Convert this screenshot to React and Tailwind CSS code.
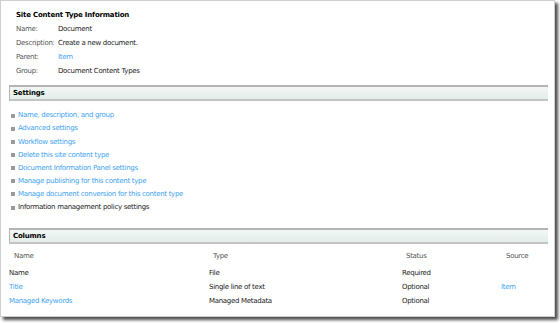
export default function App() {
  const font = { fontFamily: '"DejaVu Sans", Verdana, sans-serif' };
  const settings = [
    ["Name, description, and group", true],
    ["Advanced settings", true],
    ["Workflow settings", true],
    ["Delete this site content type", true],
    ["Document Information Panel settings", true],
    ["Manage publishing for this content type", true],
    ["Manage document conversion for this content type", true],
    ["Information management policy settings", false],
  ];
  const info = [
    ["Name:", "Document", false],
    ["Description:", "Create a new document.", false],
    ["Parent:", "Item", true],
    ["Group:", "Document Content Types", false],
  ];
  const rows = [
    ["Name", false, "File", "Required", ""],
    ["Title", true, "Single line of text", "Optional", "Item"],
    ["Managed Keywords", true, "Managed Metadata", "Optional", ""],
  ];
  const Bar = ({ children }) => (
    <div className="ml-[8px] mr-[6px] h-[16px] border-t-2 border-l border-b-2 border-t-[#b4b4b4] border-l-[#b4b4b4] border-b-[#c4c4c4] bg-gradient-to-b from-[#f2f7f5] to-[#e3ede9] flex items-center pl-[3px] text-[7px] font-bold text-black tracking-[-0.2px]">
      {children}
    </div>
  );
  return (
    <div className="w-[560px] h-[323px] bg-white overflow-hidden tracking-[-0.3px]" style={font}>
      <div className="w-[555px] h-[317px] bg-white border border-[#cfcfcf] shadow-[3px_3px_3px_rgba(0,0,0,0.7)]">
        <div className="pt-[7px] pl-[15px]">
          <div className="h-[14px] leading-[14px] text-[7px] font-bold text-black tracking-[-0.2px]">Site Content Type Information</div>
          {info.map(([l, v, link]) => (
            <div key={l} className="h-[14px] flex items-center text-[7px]">
              <span className="w-[42px] text-[#555]">{l}</span>
              <span className={link ? "text-[#3ea2f2]" : "text-[#222]"}>{v}</span>
            </div>
          ))}
        </div>
        <div className="mt-[7px]">
          <Bar>Settings</Bar>
        </div>
        <div className="pt-[8px] pl-[10px]">
          {settings.map(([t, link]) => (
            <div key={t} className="h-[13.15px] flex items-center text-[7px]">
              <span className="w-[4px] h-[4px] bg-[#9a9a9a] mr-[3px]" />
              <span className={link ? "text-[#3ea2f2]" : "text-[#222]"}>{t}</span>
            </div>
          ))}
        </div>
        <div className="mt-[14px]">
          <Bar>Columns</Bar>
        </div>
        <div className="text-[7px] pt-[2px]">
          <div className="h-[20px] flex items-center text-[#555]">
            <span className="w-[212px] pl-[13px]">Name</span>
            <span className="w-[193px]">Type</span>
            <span className="w-[100px]">Status</span>
            <span>Source</span>
          </div>
          {rows.map(([n, link, t, s, src]) => (
            <div key={n} className="h-[14px] flex items-center text-[#222]">
              <span className={"w-[208px] pl-[8px] " + (link ? "text-[#3ea2f2]" : "")}>{n}</span>
              <span className="w-[193px]">{t}</span>
              <span className="w-[99px]">{s}</span>
              <span className="text-[#3ea2f2]">{src}</span>
            </div>
          ))}
        </div>
      </div>
    </div>
  );
}
